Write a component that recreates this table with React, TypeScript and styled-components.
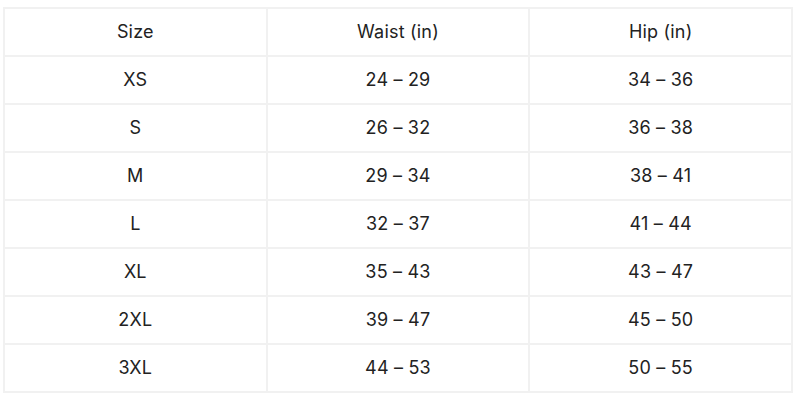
import React from 'react';
import styled, { createGlobalStyle } from 'styled-components';

const GlobalStyle = createGlobalStyle`
  body {
    margin: 0;
    background: #ffffff;
  }
`;

const Page = styled.div`
  padding: 7px 0 0 3px;
`;

const Chart = styled.div`
  width: 790px;
  display: grid;
  grid-template-columns: repeat(3, 1fr);
  border-top: 2px solid #f1f1f1;
  border-left: 2px solid #f1f1f1;
  box-sizing: border-box;
`;

const Cell = styled.div`
  height: 48px;
  box-sizing: border-box;
  padding-bottom: 1px;
  border-right: 2px solid #f1f1f1;
  border-bottom: 2px solid #f1f1f1;
  display: flex;
  align-items: center;
  justify-content: center;
  font-family: Inter, 'Open Sans', sans-serif;
  font-size: 18px;
  letter-spacing: 0.2px;
  color: #222222;
`;

const header = ['Size', 'Waist (in)', 'Hip (in)'];

const rows = [
  ['XS', '24 – 29', '34 – 36'],
  ['S', '26 – 32', '36 – 38'],
  ['M', '29 – 34', '38 – 41'],
  ['L', '32 – 37', '41 – 44'],
  ['XL', '35 – 43', '43 – 47'],
  ['2XL', '39 – 47', '45 – 50'],
  ['3XL', '44 – 53', '50 – 55'],
];

export default function App() {
  return (
    <>
      <GlobalStyle />
      <Page>
        <Chart>
          {header.map((h) => (
            <Cell key={h}>{h}</Cell>
          ))}
          {rows.map((r) => r.map((v, i) => <Cell key={r[0] + i}>{v}</Cell>))}
        </Chart>
      </Page>
    </>
  );
}
